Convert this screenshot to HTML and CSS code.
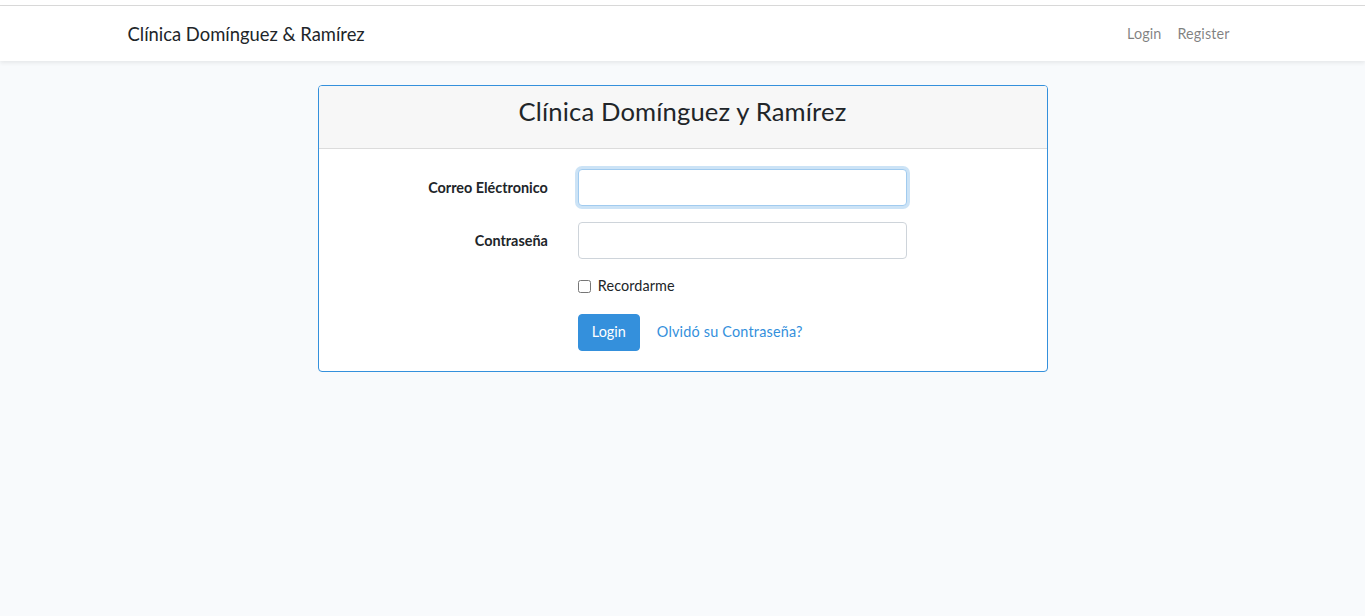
FILE: index.html
```html
<!DOCTYPE html>
<html lang="es">
<head>
<meta charset="utf-8">
<title>Clínica Domínguez &amp; Ramírez</title>
<link rel="stylesheet" href="styles.css">
</head>
<body>
<div class="topstrip"></div>
<nav class="navbar">
  <div class="container nav-inner">
    <a class="brand" href="#">Clínica Domínguez &amp; Ramírez</a>
    <ul class="nav-links">
      <li><a href="#">Login</a></li>
      <li><a href="#">Register</a></li>
    </ul>
  </div>
</nav>
<main class="main">
  <div class="card">
    <div class="card-header">Clínica Domínguez y Ramírez</div>
    <div class="card-body">
      <form class="form">
        <div class="row">
          <label class="col-label" for="email">Correo Eléctronico</label>
          <div class="col-field"><input id="email" class="input input-focus" type="email"></div>
        </div>
        <div class="row">
          <label class="col-label" for="password">Contraseña</label>
          <div class="col-field"><input id="password" class="input" type="password"></div>
        </div>
        <div class="row row-check">
          <div class="col-offset"></div>
          <div class="col-field">
            <label class="check"><input type="checkbox" class="check-box"><span class="check-text">Recordarme</span></label>
          </div>
        </div>
        <div class="row row-last">
          <div class="col-offset"></div>
          <div class="col-field actions">
            <button type="button" class="btn btn-primary">Login</button>
            <a class="btn btn-link" href="#">Olvidó su Contraseña?</a>
          </div>
        </div>
      </form>
    </div>
  </div>
</main>
</body>
</html>
```
FILE: styles.css
```css
* { box-sizing: border-box; }
html, body { margin: 0; padding: 0; }
body {
  background: #f8fafc;
  font-family: Lato, "Noto Sans", sans-serif;
  font-size: 14.4px;
  line-height: 1.6;
  color: #212529;
  min-height: 616px;
}
.topstrip {
  height: 6px;
  background: #fff;
  border-bottom: 1px solid #dadada;
}
.navbar {
  background: #fff;
  padding: 8px 0;
  box-shadow: 0 2px 4px rgba(0,0,0,.075);
}
.container {
  width: 1140px;
  margin: 0 auto;
  padding: 0 15px;
}
.nav-inner {
  display: flex;
  align-items: center;
  justify-content: space-between;
  height: 39px;
}
.brand {
  font-size: 18.4px;
  line-height: 28px;
  padding: 6px 0 5px;
  color: #212529;
  text-decoration: none;
}
.nav-links {
  list-style: none;
  margin: 0;
  padding: 0;
  display: flex;
}
.nav-links a {
  display: block;
  padding: 8px 8px 8px;
  color: rgba(0,0,0,.5);
  text-decoration: none;
  letter-spacing: 0.1px;
}
.main {
  padding: 24px 0;
  display: flex;
  justify-content: center;
}
.card {
  width: 730px;
  background: #fff;
  border: 1px solid #3490dc;
  border-radius: 4px;
  overflow: hidden;
}
.card-header {
  background: #f7f7f7;
  border-bottom: 1px solid #dcdcdc;
  height: 63px;
  padding: 6px 20px 18px;
  font-size: 25.6px;
  line-height: 38px;
  letter-spacing: 0.15px;
  text-align: center;
}
.card-body { padding: 20px; }
.form { margin: 0 -15px; }
.row {
  display: flex;
  margin-bottom: 16px;
}
.row-check { height: 23px; }
.row-last { margin-bottom: 0; }
.col-label, .col-offset {
  width: 33.3333%;
  padding: 7px 15px 7px;
  text-align: right;
  font-weight: 700;
}
.col-offset { padding: 0 15px; }
.col-field {
  width: 50%;
  padding: 0 15px;
}
.input {
  display: block;
  width: 100%;
  height: 37px;
  padding: 6px 12px;
  font: inherit;
  color: #495057;
  background: #fff;
  border: 1px solid #ced4da;
  border-radius: 4px;
  outline: none;
}
.input-focus {
  border-color: #a1cbef;
  box-shadow: 0 0 0 3px rgba(52,144,220,.25);
}
.check {
  display: flex;
  align-items: center;
  gap: 7px;
  height: 23px;
  margin-top: 0;
}
.check-box {
  width: 13px;
  height: 13px;
  margin: 0;
}
.check-text {
  position: relative;
  top: -1px;
  letter-spacing: 0.1px;
}
.actions {
  display: flex;
  align-items: center;
  gap: 4px;
}
.btn {
  display: inline-block;
  font: inherit;
  height: 37px;
  padding: 5px 13px 7px;
  border: 1px solid transparent;
  border-radius: 4px;
  line-height: 23px;
  text-decoration: none;
}
.btn-primary {
  background: #3490dc;
  border-color: #3490dc;
  color: #fff;
}
.btn-link {
  color: #3490dc;
  padding-left: 12px;
  letter-spacing: 0.2px;
}
```
